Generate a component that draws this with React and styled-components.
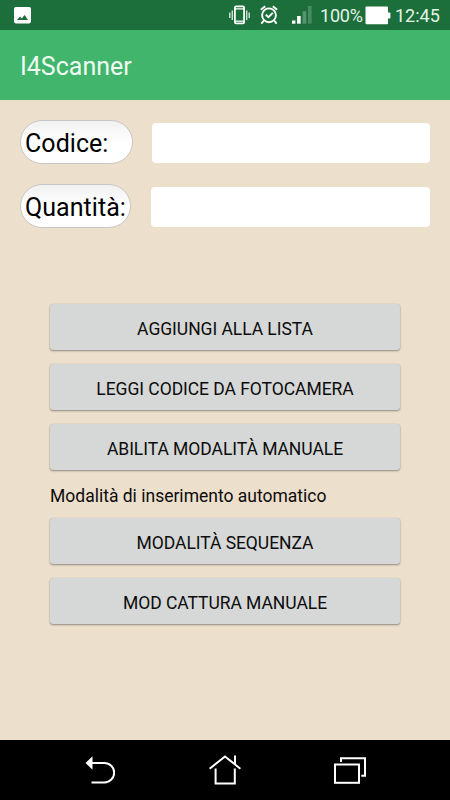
import React from "react";
import styled, { createGlobalStyle } from "styled-components";

const GlobalStyle = createGlobalStyle`
  * {
    box-sizing: border-box;
  }

  body {
    margin: 0;
    font-family: Roboto, sans-serif;
    color: #0c0c0c;
  }
`;

const Screen = styled.div`
  display: flex;
  flex-direction: column;
  width: 450px;
  height: 800px;
  background-color: #ecdfcc;
`;

const StatusBar = styled.header`
  display: flex;
  align-items: center;
  height: 30px;
  padding: 0 10px 0 14px;
  background-color: #1c6f3a;
`;

const StatusIcon = styled.svg`
  display: block;
  flex: none;
  margin-right: ${(props) => props.$gap || 0}px;
`;

const StatusText = styled.span`
  width: ${(props) => props.$width}px;
  font-size: 18px;
  line-height: 30px;
  padding-top: 2px;
  letter-spacing: ${(props) => props.$spacing || 0}px;
  white-space: nowrap;
  color: #e4f3e8;
`;

const Spacer = styled.div`
  flex: 1;
`;

const Toolbar = styled.div`
  display: flex;
  align-items: center;
  height: 70px;
  padding: 3px 20px 0;
  background-color: #41b56b;
`;

const Title = styled.h1`
  margin: 0;
  font-size: 25px;
  font-weight: 400;
  color: #f0fbf3;
`;

const Form = styled.main`
  flex: 1;
  padding: 20px 20px 0;
`;

const Field = styled.div`
  display: flex;
  align-items: flex-end;
  justify-content: space-between;
  height: 44px;
  margin-bottom: 20px;
`;

const Label = styled.label`
  width: ${(props) => props.$width}px;
  height: 44px;
  padding-left: 4px;
  border: 1px solid #c9c7c4;
  border-radius: 22px;
  background: linear-gradient(#f1f1f1, #ffffff 50%);
  font-size: 25px;
  line-height: 45px;
  letter-spacing: 0.05px;
  white-space: nowrap;
  color: #000;
`;

const Input = styled.input`
  width: ${(props) => props.$width}px;
  height: 40px;
  margin-bottom: 1px;
  padding: 0 8px;
  border: none;
  border-radius: 4px;
  outline: none;
  background-color: #fff;
  font: 25px Roboto, sans-serif;
`;

const Actions = styled.div`
  display: flex;
  flex-direction: column;
  gap: 14px;
  padding: 56px 30px 0;
`;

const Button = styled.button`
  height: 46px;
  padding: 4px 0 0;
  border: none;
  border-radius: 3px;
  background-color: #d6d8d7;
  box-shadow: 0 1px 2px rgba(0, 0, 0, 0.38), 0 0 1px rgba(0, 0, 0, 0.12);
  font: 17.5px Roboto, sans-serif;
  letter-spacing: -0.05px;
  text-transform: uppercase;
  color: #0c0c0c;
`;

const Mode = styled.p`
  height: 20px;
  margin: 0;
  font-size: 17.5px;
  line-height: 24px;
`;

const NavBar = styled.nav`
  display: grid;
  grid-template-columns: repeat(3, 125px);
  justify-content: center;
  align-items: center;
  justify-items: center;
  height: 60px;
  background-color: #000;
`;

const NavIcon = styled.svg`
  display: block;
  fill: none;
  stroke: #fff;
  stroke-width: 2;
`;

function App() {
  return (
    <>
      <GlobalStyle />
      <Screen>
        <StatusBar>
          <StatusIcon width="17" height="17" viewBox="0 0 17 17">
            <rect width="17" height="16.4" rx="1.8" fill="#fff" />
            <path d="M3 13 L6 9.5 L7.8 11.4 L10.6 8 L14 13 Z" fill="#1c6f3a" />
          </StatusIcon>
          <Spacer />
          <StatusIcon $gap={10} width="21" height="20" viewBox="0 0 21 20">
            <path
              d="M0.8 7.5 V13 M3.3 5.5 V15 M17.7 5.5 V15 M20.2 7.5 V13"
              stroke="#cfe6d6"
              strokeWidth="1.4"
            />
            <rect x="5.9" y="1.4" width="9.2" height="17" rx="1.2" fill="none" stroke="#fff" strokeWidth="1.8" />
            <path d="M6 3.9 H15 M6 16.2 H15" stroke="#fff" strokeWidth="1.3" />
          </StatusIcon>
          <StatusIcon $gap={14} width="18" height="20" viewBox="0 0 18 20" fill="none" stroke="#fff" strokeWidth="1.9">
            <circle cx="9" cy="10.3" r="6.9" />
            <path d="M0.8 4.8 L5.2 1.3 M17.2 4.8 L12.8 1.3 M3.8 15.5 L1.4 18.6 M14.2 15.5 L16.6 18.6" />
            <path d="M5.8 9.8 L8.4 12.2 L12.8 7.8" />
          </StatusIcon>
          <StatusIcon $gap={8} width="20" height="20" viewBox="0 0 20 20">
            <rect x="0" y="15.5" width="3.4" height="3.2" fill="#fff" />
            <rect x="5.1" y="11" width="3.6" height="7.7" fill="#fff" />
            <rect x="10.6" y="6.2" width="3.6" height="12.5" fill="#579570" />
            <rect x="16" y="1" width="3.6" height="17.7" fill="#488b62" />
          </StatusIcon>
          <StatusText $width={45} $spacing={-0.2}>100%</StatusText>
          <StatusIcon $gap={4} width="26" height="19" viewBox="0 0 26 19">
            <rect x="0.5" y="0.5" width="22.5" height="17.8" rx="1" fill="#fff" />
            <rect x="22" y="6.5" width="3.4" height="6" rx="0.8" fill="#fff" />
          </StatusIcon>
          <StatusText $width={45}>12:45</StatusText>
        </StatusBar>
        <Toolbar>
          <Title>I4Scanner</Title>
        </Toolbar>
        <Form>
          <Field>
            <Label htmlFor="codice" $width={113}>Codice:</Label>
            <Input id="codice" $width={278} />
          </Field>
          <Field>
            <Label htmlFor="quantita" $width={111}>Quantità:</Label>
            <Input id="quantita" $width={279} />
          </Field>
          <Actions>
            <Button>Aggiungi alla lista</Button>
            <Button>Leggi codice da fotocamera</Button>
            <Button>Abilita modalità manuale</Button>
            <Mode>Modalità di inserimento automatico</Mode>
            <Button>Modalità sequenza</Button>
            <Button>Mod cattura manuale</Button>
          </Actions>
        </Form>
        <NavBar>
          <NavIcon width="30" height="30" viewBox="0 0 30 30">
            <path d="M7 8 H19.5 A9.7 9.7 0 0 1 19.5 27.4 H6.5" />
            <path d="M0.5 8 L7.5 1.2 V14.8 Z" fill="#fff" stroke="none" />
          </NavIcon>
          <NavIcon width="32" height="30" viewBox="0 0 32 30">
            <path d="M0.6 13.7 L16 1.5 L31.4 13.7 M26 0.5 V9.5 M6.6 13.5 V28.6 H25.8 V13.5" />
          </NavIcon>
          <NavIcon width="32" height="27" viewBox="0 0 32 27">
            <rect x="1" y="7.5" width="24" height="18.3" />
            <path d="M7 5 V1.2 H31 V18.7 H27.3" />
          </NavIcon>
        </NavBar>
      </Screen>
    </>
  );
}

export default App;
